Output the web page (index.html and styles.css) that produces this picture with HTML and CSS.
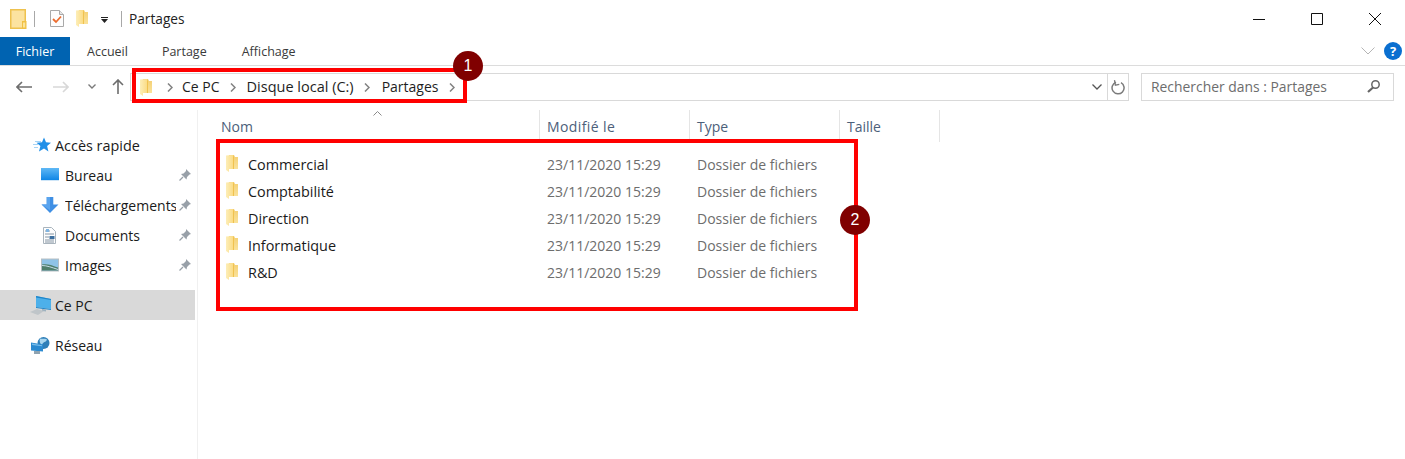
FILE: index.html
```html
<!DOCTYPE html>
<html lang="fr">
<head>
<meta charset="utf-8">
<title>Partages</title>
<link rel="stylesheet" href="styles.css">
</head>
<body>
<svg class="defs" aria-hidden="true">
  <defs>
    <linearGradient id="fp" x1="0" y1="0" x2="1" y2="0"><stop offset="0" stop-color="#fdeeb8"/><stop offset="1" stop-color="#fbdc86"/></linearGradient>
    <linearGradient id="fb" x1="0" y1="0" x2="0" y2="1"><stop offset="0" stop-color="#f4cf72"/><stop offset="1" stop-color="#fae29a"/></linearGradient>
    <linearGradient id="sky" x1="0" y1="0" x2="0" y2="1"><stop offset="0" stop-color="#5fb8f5"/><stop offset="1" stop-color="#0f86e6"/></linearGradient>
    <symbol id="folder" viewBox="0 0 12 17">
      <path d="M3 0h5l1 2h3v12H3z" fill="url(#fb)"/>
      <path d="M0 .5L7 0v14H3v3l-3-2z" fill="url(#fp)"/>
      <path d="M7 0l1 2v12H7z" fill="#f0c24f"/>
    </symbol>
    <symbol id="pin" viewBox="0 0 12 12">
      <path d="M7 0l5 5-1.500.6-2.500 2.400-.5 2.500L2 5l2.500-.5L7 2z" fill="#98a0a8"/>
      <path d="M4 8l-3.500 3.500" stroke="#98a0a8" stroke-width="1.200"/>
    </symbol>
    <symbol id="chev" viewBox="0 0 6 9">
      <path d="M1 .5l4 4-4 4" fill="none" stroke="#808080" stroke-width="1.500"/>
    </symbol>
  </defs>
</svg>
<div class="window">
  <header class="titlebar">
    <div class="qat">
      <svg class="i-appfolder" viewBox="0 0 17 20"><path d="M.75.75h14.500v18.500H.75z" fill="#fce3a0" stroke="#eec24f" stroke-width="1.500"/><path d="M12 12h4.500v8H12z" fill="#f1c044"/><path d="M13 13.500h2.200v5H13z" fill="#fbe49b"/></svg>
      <span class="qat-sep"></span>
      <svg class="i-props" viewBox="0 0 14 17"><path d="M.5.5h9l4 4v12H.5z" fill="#fdfdfd" stroke="#a9a9a9"/><path d="M9.500.5v4h4" fill="#e6e6e6" stroke="#a9a9a9"/><path d="M3 9l3 3 5-5.500" fill="none" stroke="#ec6c2e" stroke-width="1.800"/></svg>
      <svg class="i-folder-s" viewBox="0 0 12 17"><use href="#folder"/></svg>
      <svg class="i-drop" viewBox="0 0 7 6"><path d="M0 0h7v1H0zM0 2h7L3.500 6z" fill="#222"/></svg>
      <span class="qat-sep long"></span>
      <span class="title">Partages</span>
    </div>
    <div class="wincontrols">
      <svg viewBox="0 0 12 12"><path d="M0 6.500h12" stroke="#111" fill="none"/></svg>
      <svg viewBox="0 0 12 12"><path d="M.5.5h11v11H.5z" stroke="#111" fill="none"/></svg>
      <svg viewBox="0 0 12 12"><path d="M0 0l12 12M12 0L0 12" stroke="#111" fill="none"/></svg>
    </div>
  </header>

  <nav class="ribbon">
    <span class="tab tab-file">Fichier</span>
    <span class="tab tab-a">Accueil</span>
    <span class="tab tab-b">Partage</span>
    <span class="tab tab-c">Affichage</span>
    <span class="ribbon-end">
      <svg class="i-collapse" viewBox="0 0 14 8"><path d="M.5.5L7 7l6.500-6.500" fill="none" stroke="#b5b5b5"/></svg>
      <span class="help">?</span>
    </span>
  </nav>

  <div class="navbar">
    <div class="arrows">
      <svg class="i-back" viewBox="0 0 16 12"><path d="M16 6H1M6 1L1 6l5 5" fill="none" stroke="#6d6d6d" stroke-width="1.600"/></svg>
      <svg class="i-fwd" viewBox="0 0 16 12"><path d="M0 6h15M10 1l5 5-5 5" fill="none" stroke="#d8d8d8" stroke-width="1.600"/></svg>
      <svg class="i-hist" viewBox="0 0 8 5"><path d="M.5.500L4 4l3.500-3.500" fill="none" stroke="#7a7a7a" stroke-width="1.400"/></svg>
      <svg class="i-up" viewBox="0 0 12 15"><path d="M6 15V1M1 6l5-5 5 5" fill="none" stroke="#6d6d6d" stroke-width="1.600"/></svg>
    </div>
    <div class="address">
      <svg class="i-folder-s" viewBox="0 0 12 17"><use href="#folder"/></svg>
      <svg class="chev first" viewBox="0 0 6 9"><use href="#chev"/></svg>
      <span class="crumb">Ce PC</span>
      <svg class="chev" viewBox="0 0 6 9"><use href="#chev"/></svg>
      <span class="crumb crumb-wide">Disque local (C:)</span>
      <svg class="chev chev-after-disk" viewBox="0 0 6 9"><use href="#chev"/></svg>
      <span class="crumb">Partages</span>
      <svg class="chev" viewBox="0 0 6 9"><use href="#chev"/></svg>
      <span class="addr-end">
        <svg class="i-addr-drop" viewBox="0 0 10 6"><path d="M.5.500L5 5l4.500-4.500" fill="none" stroke="#555" stroke-width="1.300"/></svg>
        <span class="refresh"><svg viewBox="0 0 14 15"><path d="M5 2.200A6 6 0 1 0 10 2.600" fill="none" stroke="#7b7b7b" stroke-width="1.500"/><path d="M4 0v5h4" fill="none" stroke="#7b7b7b" stroke-width="1.300" transform="rotate(-10 5 3)"/></svg></span>
      </span>
    </div>
    <div class="search">
      <span>Rechercher dans : Partages</span>
      <svg viewBox="0 0 14 14"><circle cx="8.500" cy="5.500" r="3.700" fill="none" stroke="#666" stroke-width="1.500"/><path d="M6 8.500L1 13" stroke="#666" stroke-width="2.200"/></svg>
    </div>
  </div>

  <main class="body">
    <aside class="sidebar">
      <div class="side-item top first-top">
        <svg class="s-ico" viewBox="0 0 18 15"><path d="M11 0l2 4.800 5 .4-3.900 3.200 1.300 5.600L11 11l-5 3 1.400-5.600L3.500 5.200l5.500-.4z" fill="#1f8fe8"/><path d="M2 4h6M0 7h5M1 10h4" stroke="#a5d3f5"/></svg>
        <span class="side-label">Accès rapide</span>
      </div>
      <div class="side-item sub">
        <svg class="s-ico" viewBox="0 0 18 14"><path d="M0 0h18v12H0z" fill="url(#sky)"/><path d="M0 12h18v1H0z" fill="#cfe6f8"/></svg>
        <span class="side-label">Bureau</span>
        <svg class="pin" viewBox="0 0 12 12"><use href="#pin"/></svg>
      </div>
      <div class="side-item sub">
        <svg class="s-ico" viewBox="0 0 18 17"><path d="M5.500 0h7v8H18l-9 9-9-9h5.500z" fill="#3f8fe4"/><path d="M5.500 0h3.500v14L0 8h5.500z" fill="#5aa4ee"/></svg>
        <span class="side-label clip">Téléchargements</span>
        <svg class="pin" viewBox="0 0 12 12"><use href="#pin"/></svg>
      </div>
      <div class="side-item sub">
        <svg class="s-ico doc" viewBox="0 0 13 17"><path d="M.5.500h8l4 4v12H.5z" fill="#fdfdfd" stroke="#a9b4bd"/><path d="M2 4h5M2 7h9M2 10h4M2 13h9M2 15h9" stroke="#8494a3"/><path d="M6.500 9h5v3h-5z" fill="#3d6f9f"/><path d="M3 2h3v3H3z" fill="#7fb5e3"/></svg>
        <span class="side-label">Documents</span>
        <svg class="pin" viewBox="0 0 12 12"><use href="#pin"/></svg>
      </div>
      <div class="side-item sub">
        <svg class="s-ico" viewBox="0 0 18 13"><path d="M0 0h18v13H0z" fill="#b6bec3"/><path d="M1 1h16v11H1z" fill="#8fc3e6"/><path d="M1 6c4-1 9 0 16 3v3H1z" fill="#4f7f6c"/><path d="M1 7c5 0 10 2 16 4" stroke="#c7dce8" fill="none"/></svg>
        <span class="side-label">Images</span>
        <svg class="pin" viewBox="0 0 12 12"><use href="#pin"/></svg>
      </div>
      <div class="side-item top selected">
        <svg class="s-ico pc" viewBox="0 0 21 19"><path d="M6 0l15 3v10L6 11z" fill="#4db0ea"/><path d="M6 0l15 3v1L6 1.500zM6 11l15 2v1L6 12z" fill="#1e85c9"/><path d="M12 13l4 .6v2l-4-.6z" fill="#9db1be"/><path d="M0 16l7-3 7 2-6 4z" fill="#bfc5c9"/></svg>
        <span class="side-label">Ce PC</span>
      </div>
      <div class="side-item top network">
        <svg class="s-ico net" viewBox="0 0 19 17"><circle cx="12.500" cy="6" r="6" fill="#2f7fb8"/><path d="M9 1.500c3 .5 6-.5 7 1-1 3-4 2-5 5.500-2-1-3-4-2-6.500z" fill="#a9d6ef"/><path d="M0 5.500l12 2v7l-12-1z" fill="#2b8ad0"/><path d="M1 6.500l10 1.700v1L1 8z" fill="#79bde9"/><path d="M3 14h6v3H3z" fill="#8fa3b1"/></svg>
        <span class="side-label">Réseau</span>
      </div>
    </aside>

    <section class="content">
      <div class="columns">
        <span class="col col-name">Nom<svg class="sort" viewBox="0 0 9 5"><path d="M.5 4.500L4.500.5l4 4" fill="none" stroke="#8a8a8a"/></svg></span>
        <span class="col col-date">Modifié le</span>
        <span class="col col-type">Type</span>
        <span class="col col-size">Taille</span>
      </div>
      <ul class="rows">
        <li class="row"><span class="r-name"><svg class="i-folder-r" viewBox="0 0 12 17"><use href="#folder"/></svg>Commercial</span><span class="r-date">23/11/2020 15:29</span><span class="r-type">Dossier de fichiers</span></li>
        <li class="row"><span class="r-name"><svg class="i-folder-r" viewBox="0 0 12 17"><use href="#folder"/></svg>Comptabilité</span><span class="r-date">23/11/2020 15:29</span><span class="r-type">Dossier de fichiers</span></li>
        <li class="row"><span class="r-name"><svg class="i-folder-r" viewBox="0 0 12 17"><use href="#folder"/></svg>Direction</span><span class="r-date">23/11/2020 15:29</span><span class="r-type">Dossier de fichiers</span></li>
        <li class="row"><span class="r-name"><svg class="i-folder-r" viewBox="0 0 12 17"><use href="#folder"/></svg>Informatique</span><span class="r-date">23/11/2020 15:29</span><span class="r-type">Dossier de fichiers</span></li>
        <li class="row"><span class="r-name"><svg class="i-folder-r" viewBox="0 0 12 17"><use href="#folder"/></svg>R&amp;D</span><span class="r-date">23/11/2020 15:29</span><span class="r-type">Dossier de fichiers</span></li>
      </ul>
    </section>
  </main>

  <div class="mark mark-1"></div>
  <div class="mark mark-2"></div>
  <div class="badge badge-1">1</div>
  <div class="badge badge-2">2</div>
</div>
</body>
</html>
```

FILE: styles.css
```css
* { box-sizing: border-box; }
html, body { margin: 0; padding: 0; background: #fff; }
body { font-family: "Open Sans", "Noto Sans", "Liberation Sans", sans-serif; color: #1a1a1a; }
svg { display: block; flex: none; }
.defs { position: absolute; width: 0; height: 0; }

.window { position: relative; width: 1405px; height: 459px; overflow: hidden; display: flex; flex-direction: column; }

/* title bar */
.titlebar { height: 37px; display: flex; align-items: center; justify-content: space-between; }
.qat { display: flex; align-items: center; padding-left: 10px; }
.i-appfolder { width: 17px; height: 20px; }
.qat-sep { width: 1px; height: 16px; background: #a8a8a8; margin-left: 7px; }
.qat-sep.long { margin-left: 13px; }
.i-props { width: 14px; height: 17px; margin-left: 15px; }
.i-folder-s { width: 12px; height: 17px; }
.qat .i-folder-s { margin-left: 12px; }
.i-drop { width: 7px; height: 6px; margin-left: 13px; margin-top: 3px; }
.title { font-size: 13.700px; margin-left: 7px; color: #222; }
.wincontrols { display: flex; gap: 46px; padding-right: 24px; }
.wincontrols svg { width: 12px; height: 12px; }

/* ribbon */
.ribbon { height: 29px; display: flex; align-items: stretch; border-bottom: 1px solid #dcdcdc; font-size: 12.500px; color: #3a3a3a; }
.tab { display: flex; align-items: center; }
.tab-file { width: 70px; justify-content: center; background: #0063b1; color: #fff; }
.tab-a { margin-left: 17px; }
.tab-b { margin-left: 34px; }
.tab-c { margin-left: 35px; }
.ribbon-end { margin-left: auto; display: flex; align-items: center; gap: 9px; padding-right: 3px; }
.i-collapse { width: 14px; height: 8px; }
.help { width: 18px; height: 18px; border-radius: 50%; background: #0a6fd0; color: #fff; font-size: 13px; font-weight: 700; display: flex; align-items: center; justify-content: center; }

/* navigation bar */
.navbar { height: 44px; display: flex; padding-top: 7px; align-items: flex-start; }
.arrows { width: 130px; height: 27px; display: flex; align-items: center; padding-left: 16px; }
.i-back, .i-fwd { width: 16px; height: 12px; }
.i-fwd { margin-left: 21px; }
.i-hist { width: 8px; height: 5px; margin-left: 19px; }
.i-up { width: 12px; height: 15px; margin-left: 16px; }
.address { width: 999px; height: 28px; border: 1px solid #d9d9d9; display: flex; align-items: center; padding-left: 9px; font-size: 14px; color: #1e1e1e; }
.crumb { padding-bottom: 2px; }
.crumb-wide { font-size: 14.500px; }
.chev { width: 6px; height: 9px; margin: 0 10.500px; }
.chev.first { margin-left: 15px; margin-right: 9px; }
.chev.chev-after-disk { margin-right: 11.500px; }
.addr-end { margin-left: auto; display: flex; align-items: center; height: 100%; }
.i-addr-drop { width: 10px; height: 6px; margin-right: 5px; }
.refresh { width: 21px; height: 100%; border-left: 1px solid #d9d9d9; display: flex; align-items: center; justify-content: center; }
.refresh svg { width: 14px; height: 15px; }
.search { width: 253px; height: 28px; margin-left: 12px; border: 1px solid #d9d9d9; display: flex; align-items: center; justify-content: space-between; padding: 0 12px 2px 9px; font-size: 13.900px; color: #6d6d6d; }
.search svg { width: 14px; height: 14px; }

/* body */
.body { flex: 1; display: flex; min-height: 0; }
.sidebar { width: 198px; border-right: 1px solid #f0f0f0; padding-top: 20px; font-size: 14px; color: #1a1a1a; }
.side-item { height: 30px; width: 195px; display: flex; align-items: center; position: relative; }
.side-item.top { padding-left: 33px; }
.side-item.sub { padding-left: 41px; }
.side-item.selected { background: #d9d9d9; margin-top: 10px; padding-left: 30px; }
.side-item.network { margin-top: 10px; padding-left: 31px; }
.s-ico { width: 18px; height: 16px; }
.s-ico.doc { width: 13px; height: 17px; margin: 0 3px 0 2px; }
.s-ico.pc { width: 21px; height: 19px; margin-right: 0; }
.s-ico.net { width: 19px; height: 17px; margin-right: 1px; }
.side-label { margin-left: 4px; white-space: nowrap; }
.sub .side-label { margin-left: 6px; }
.side-label.clip { width: 111px; overflow: hidden; }
.first-top .side-label { font-size: 14.400px; }
.pin { width: 12px; height: 12px; position: absolute; right: 4px; top: 9px; }

/* content */
.content { flex: 1; min-width: 0; }
.columns { display: flex; height: 32px; font-size: 14px; color: #4c607a; }
.col { display: flex; align-items: center; padding-left: 7px; border-right: 1px solid #e5e5e5; position: relative; }
.col-name { width: 326px; margin-left: 16px; }
.col-date, .col-type { width: 150px; }
.col-date { letter-spacing: .4px; }
.col-size { width: 100px; }
.sort { position: absolute; left: 159px; top: 1px; width: 9px; height: 5px; }
.rows { list-style: none; margin: 9px 0 0; padding: 0; font-size: 14px; }
.row { display: flex; height: 27px; align-items: center; }
.r-name { width: 349px; padding-left: 28px; display: flex; align-items: center; font-size: 14.400px; color: #1a1a1a; }
.i-folder-r { width: 12px; height: 17px; margin-right: 10px; margin-top: -3px; }
.r-date { width: 150px; color: #6d6d6d; }
.r-type { color: #6d6d6d; }

/* annotations lying over the window */
.mark { position: absolute; border: 4px solid #f00; }
.mark-1 { left: 132px; top: 68px; width: 335px; height: 35px; }
.mark-2 { left: 216px; top: 139px; width: 642px; height: 172px; }
.badge { position: absolute; width: 30px; height: 30px; border-radius: 50%; background: #800000; color: #fff; display: flex; align-items: center; justify-content: center; font-family: "Liberation Sans", sans-serif; font-size: 16px; }
.badge-1 { left: 453px; top: 51px; }
.badge-2 { left: 840px; top: 205px; }
```
